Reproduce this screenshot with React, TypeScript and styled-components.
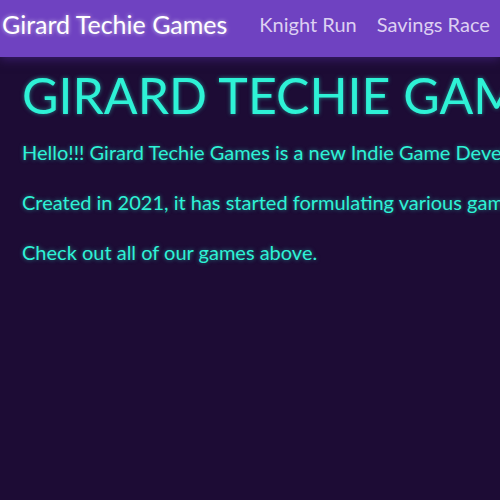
import React from "react";
import styled, { createGlobalStyle } from "styled-components";

const Global = createGlobalStyle`
  html, body { margin: 0; padding: 0; background: #1d0c35; overflow: hidden; }
  body { font-family: Lato, "Open Sans", sans-serif; }
`;

const Page = styled.div`
  min-height: 500px;
  background: #1d0c35;
`;

const Nav = styled.nav`
  display: flex;
  align-items: center;
  box-sizing: border-box;
  height: 57px;
  padding: 0 3px 9px 2px;
  gap: 32px;
  background: #6f42c1;
  box-shadow: 0 2px 10px rgba(80, 40, 150, 0.6);
  white-space: nowrap;
`;

const Brand = styled.a`
  font-size: 25px;
  color: #ffffff;
  text-shadow: 0 0 4px rgba(255, 255, 255, 0.6);
  text-decoration: none;
`;

const Links = styled.div`
  display: flex;
  gap: 20px;
`;

const NavLink = styled.a`
  font-size: 20px;
  color: #ddd0f2;
  text-decoration: none;
`;

const Main = styled.main`
  padding: 8px 22px;
  white-space: nowrap;
  color: #2ef2d6;
  text-shadow: 0 0 4px rgba(46, 242, 214, 0.5);
`;

const Title = styled.h1`
  margin: 0 0 12px;
  font-size: 50px;
  font-weight: 400;
  line-height: 1.2;
`;

const Para = styled.p`
  margin: 0 0 20px;
  font-size: 20px;
  line-height: 30px;
`;

export default function App() {
  return (
    <Page>
      <Global />
      <Nav>
        <Brand>Girard Techie Games</Brand>
        <Links>
          <NavLink>Knight Run</NavLink>
          <NavLink>Savings Race</NavLink>
        </Links>
      </Nav>
      <Main>
        <Title>GIRARD TECHIE GAMES</Title>
        <Para>Hello!!! Girard Techie Games is a new Indie Game Developer.</Para>
        <Para>Created in 2021, it has started formulating various games.</Para>
        <Para>Check out all of our games above.</Para>
      </Main>
    </Page>
  );
}
